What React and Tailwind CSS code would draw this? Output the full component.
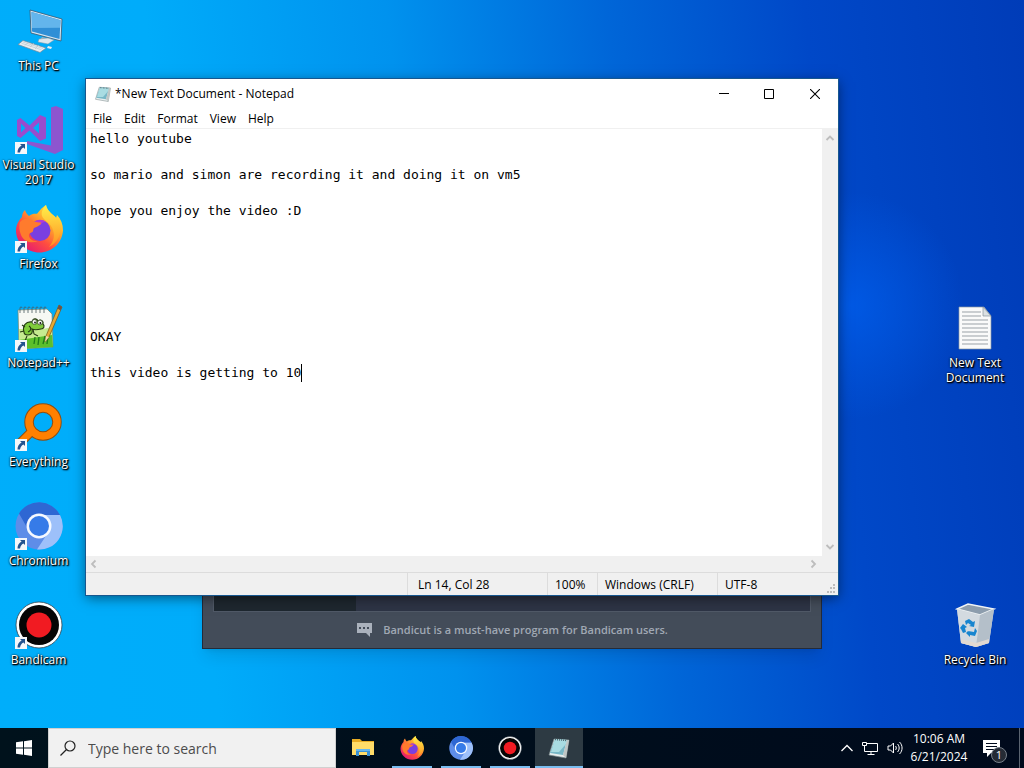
import React, { useState } from 'react';

const INITIAL_TEXT = `hello youtube

so mario and simon are recording it and doing it on vm5

hope you enjoy the video :D






OKAY

this video is getting to 10`;

/* ---------- Icons ---------- */

function ThisPcIcon({ className }) {
    return (
        <svg viewBox="0 0 48 48" className={className}>
            <path d="M15 3l32 9-1 22-30-8z" fill="#d5e6f2" />
            <path d="M15 3l32 9-1 22-30-8z" fill="none" stroke="#37556f" strokeWidth="0.8" />
            <path d="M16.5 5l29 8.200-1 18.800-27.500-7.500z" fill="#2f8fd6" />
            <path d="M16.500 5l29 8.200-.4 7.500L17 21z" fill="#63b5ec" />
            <path d="M27 30l6 1.500-1 3-7-1.500z" fill="#9fb2c0" />
            <path d="M24 32l9-1 6 2-6 4-10-2z" fill="#dfe7ec" stroke="#8196a5" strokeWidth="0.5" />
            <path d="M8 33.500L31 41l-6 4.500L3 37.500z" fill="#e9eef1" stroke="#71889a" strokeWidth="0.7" />
            <path d="M8 35l20 6.500M6.500 36.300l20 6.500M10 38.500l4-4M15 40l4-4M20 42l4-4" stroke="#b4c2cb" strokeWidth="0.6" />
            <path d="M33 39l4 1-1 2-4-1z" fill="#e9eef1" />
        </svg>
    );
}

function VisualStudioIcon({ className }) {
    return (
        <svg viewBox="0 0 48 48" className={className}>
            <path d="M36 1.500L41 0l7 3v41l-8 4L12 38v-3l24 4.500z" fill="#8d55cf" />
            <path
                d="M2 14l3.500-2 9 7.500L25 9l6 2.500v21L25 35 14.500 24.500 5.500 32 2 30zM6 17.500v9l4.500-4.500zM24 16.500L18 22l6 5.500z"
                fill="#9a4ccd"
                fillRule="evenodd"
            />
        </svg>
    );
}

function FirefoxIcon({ className }) {
    return (
        <svg viewBox="0 0 48 48" className={className}>
            <defs>
                <linearGradient id="fox" x1="0.850" y1="0.100" x2="0.200" y2="0.900">
                    <stop offset="0" stopColor="#ffe944" />
                    <stop offset="0.350" stopColor="#ffa22b" />
                    <stop offset="0.650" stopColor="#ff503e" />
                    <stop offset="1" stopColor="#e81e6d" />
                </linearGradient>
                <linearGradient id="foxTail" x1="0" y1="0" x2="0" y2="1">
                    <stop offset="0" stopColor="#fff04a" />
                    <stop offset="1" stopColor="#ff9022" />
                </linearGradient>
            </defs>
            <path
                d="M7 12c0-3 1-5 3-7 1 3 2 4.500 4 6 2-2 5-2.500 8-2.300C24 7 26 3 31 0c1 5 4 7 7 10 1.500 1 2.500 2 3 3l1-3c4 4 6 9.500 6 15.500C47 38 37 47.500 24.500 47.500S1 38 1 25.500C1 20 4 15 7 12z"
                fill="url(#fox)"
            />
            <path d="M31 0c1 5 4 7 7 10 5 4 8 9 7 17-1 7-5 12-11 15 5-6 6-12 4-17-2-7-9-9-11-14-1-4 1-8 4-11z" fill="url(#foxTail)" />
            <circle cx="25" cy="25.500" r="10.500" fill="#7a3fe0" />
            <path d="M18 18c4-4 9-4 13-1-3-.5-5 1-5 3z" fill="#b03bd8" />
            <path d="M5 17c4-4 9-4 13-1 3 1.500 6 1.500 8 1.500 0 3-4 4-7 5.500-1 1-.5 3-1.500 4-2 1-4 1-3.500 4 1 4 5 5.500 9 5-6 3-14 1-17-6-2-5-2-9-1-13z" fill="#ff7b2d" />
        </svg>
    );
}

function NotepadPlusIcon({ className }) {
    return (
        <svg viewBox="0 0 48 48" className={className}>
            <path d="M3 6l29-1 5 5 1 33-34 2z" fill="#f6f8f3" stroke="#75846c" strokeWidth="0.7" />
            <path d="M4 31c9 2 18-2 33-4l1 16-34 2z" fill="#5cbf2c" />
            <path d="M4 25c9 0 18 2 33-2v8L4 36z" fill="#c6eb90" />
            {[5, 9, 13, 17, 21, 25, 29].map((x) => (
                <path key={x} d={`M${x} 9V4c0-1.500 2-1.500 2 0`} fill="none" stroke="#4b5a60" strokeWidth="0.8" />
            ))}
            <path d="M9 28c-2-6 2-11 8-10 1-4 5-4 6-1 3-2 6 0 5 3 2 2 1 5-2 5-4 1-7 1-9 0 1 3 0 6-4 6-2 0-4-1-4-3z" fill="#7fcb3c" stroke="#243a13" strokeWidth="1.100" />
            <path d="M10 23l-3-2M9 27l-4 1M12 32l-2 5M18 25l1 5 4 2M14 22c3 2 2 5-1 6" fill="none" stroke="#243a13" strokeWidth="1.100" />
            <circle cx="19.500" cy="18" r="2.400" fill="#fff" stroke="#243a13" strokeWidth="0.7" />
            <circle cx="25" cy="18.500" r="2.400" fill="#fff" stroke="#243a13" strokeWidth="0.7" />
            <circle cx="20" cy="18.500" r="0.9" fill="#111" />
            <circle cx="25.300" cy="19" r="0.9" fill="#111" />
            <path d="M19 40l1-7M23 41l1-8M28 40l2-8M32 40l1-8" stroke="#1e7a1b" strokeWidth="1.300" />
            <path d="M44 1l3 2-13 30-4 5 1-6z" fill="#e5a935" stroke="#755118" strokeWidth="0.7" />
            <path d="M44 1l3 2-1.500 3.500-3-2z" fill="#6e5147" />
            <path d="M31 32l3 1-4 5z" fill="#f2dcb0" />
        </svg>
    );
}

function EverythingIcon({ className }) {
    return (
        <svg viewBox="0 0 48 48" className={className}>
            <path d="M19 26L5 40" stroke="#8e4d10" strokeWidth="9" />
            <circle cx="28" cy="19" r="14" fill="none" stroke="#8e4d10" strokeWidth="9.500" />
            <path d="M19 26L5 40" stroke="#ff8000" strokeWidth="7" />
            <circle cx="28" cy="19" r="14" fill="none" stroke="#ff8000" strokeWidth="7.500" />
        </svg>
    );
}

function ChromiumIcon({ className }) {
    return (
        <svg viewBox="0 0 48 48" className={className}>
            <circle cx="24" cy="24" r="23.500" fill="#5e8de8" />
            <path d="M24 13h21a23.500 23.500 0 0 1-23 34.500L33.500 30z" fill="#9dc0fa" />
            <path d="M4 11.500a23.500 23.500 0 0 1 41 1.500H24L14 29z" fill="#2e67d3" />
            <circle cx="24" cy="24" r="12.500" fill="#f5f9ff" />
            <circle cx="24" cy="24" r="10" fill="#367be8" />
        </svg>
    );
}

function BandicamIcon({ className }) {
    return (
        <svg viewBox="0 0 48 48" className={className}>
            <circle cx="24" cy="24" r="23" fill="#fff" stroke="#35424d" strokeWidth="0.8" />
            <circle cx="24" cy="24" r="20" fill="#050505" />
            <circle cx="24" cy="24" r="12.500" fill="#f11b22" />
        </svg>
    );
}

function TextFileIcon({ className }) {
    return (
        <svg viewBox="0 0 48 48" className={className}>
            <path d="M8 3h25l7 9v33H8z" fill="#fafafa" stroke="#8b98a5" strokeWidth="0.7" />
            <path d="M32 3v9h8z" fill="#dbe0e3" stroke="#87929b" strokeWidth="0.7" />
            {[8, 12].map((y) => (
                <path key={y} d={`M11 ${y}h19`} stroke="#9aa1a7" />
            ))}
            {[16, 20, 24, 28, 32, 36, 40].map((y) => (
                <path key={y} d={`M11 ${y}h26`} stroke="#9aa1a7" />
            ))}
        </svg>
    );
}

function RecycleBinIcon({ className }) {
    return (
        <svg viewBox="0 0 48 48" className={className}>
            <path d="M6 8l11-5 26 5-5 34-13 4-15-4z" fill="#d5dbe2" />
            <path d="M6 8l11-5 26 5-14 6z" fill="#8d9dad" stroke="#eff3f5" strokeWidth="1.400" />
            <path d="M6 8l23 6-4 32-15-4z" fill="#d3dae0" />
            <path d="M29 14l14-6-5 34-13 4z" fill="#b4bfc9" />
            <path d="M10 38l15 4 13-4v4l-13 4-15-4z" fill="#e2d9d1" />
            <g fill="#1785cf">
                <path d="M14 20l4-2 4 3 2-1-1 6-5-1 2-1-3-2-2 2z" />
                <path d="M12 23l4 3-2 1 1 4-3 1-2-4-1-1z" />
                <path d="M17 30l6 1 1-4 2 3-2 5-5-1v2l-4-4 3-3z" />
            </g>
        </svg>
    );
}

function NotepadIcon({ className }) {
    return (
        <svg viewBox="0 0 24 24" className={className}>
            <path d="M7 3l15 1-3 18-17-3z" fill="#e8eeee" stroke="#79888b" strokeWidth="0.7" />
            <path d="M8 3l12 1-4 15L3 17z" fill="#78b8c7" />
            <path d="M8 3l12 1-1 4-7 8-8 0z" fill="#a9dce2" />
            <path d="M20 4l2 0-3 18-3-3z" fill="#bfc6c5" />
            <path d="M8 3.500l12 1" stroke="#536970" strokeWidth="1.500" strokeDasharray="1 1" />
        </svg>
    );
}

function FolderIcon({ className }) {
    return (
        <svg viewBox="0 0 24 24" className={className}>
            <path d="M1 3h8l2 2h12v14H1z" fill="#e8ac24" />
            <path d="M1 6h22v13H1z" fill="#ffdc69" />
            <path d="M5 20v-7h14v7h-3v-4H8v4z" fill="#3991d5" />
            <path d="M5 13h14v2H5z" fill="#65b7ef" />
        </svg>
    );
}

function ShortcutArrow() {
    return (
        <svg viewBox="0 0 12 12" className="absolute bottom-0 left-0 size-3">
            <path d="M0 0h12v12H0z" fill="#f5f7fa" />
            <path d="M5 2h5v5L8.500 5.500C6.500 6.500 5.500 8 5 10.500H2.500C2.500 7.500 4 5 6.600 3.600z" fill="#24538f" />
        </svg>
    );
}

/* ---------- Desktop ---------- */

function DesktopIcon({ icon: Icon, label, shortcut, className = '' }) {
    return (
        <button type="button" className={`flex flex-col items-center gap-[3px] ${className}`}>
            <span className="relative block size-12">
                <Icon className="size-12" />
                {shortcut && <ShortcutArrow />}
            </span>
            <span className="w-19 text-center text-[12px] leading-[15px] text-white [text-shadow:1px_1px_2px_#000,1px_1px_1px_#000,0_0_2px_#000]">
                {label}
            </span>
        </button>
    );
}

const shortcuts = [
    { label: 'This PC', icon: ThisPcIcon },
    { label: 'Visual Studio 2017', icon: VisualStudioIcon, shortcut: true },
    { label: 'Firefox', icon: FirefoxIcon, shortcut: true },
    { label: 'Notepad++', icon: NotepadPlusIcon, shortcut: true },
    { label: 'Everything', icon: EverythingIcon, shortcut: true },
    { label: 'Chromium', icon: ChromiumIcon, shortcut: true },
    { label: 'Bandicam', icon: BandicamIcon, shortcut: true },
];

function BandicamWindow() {
    return (
        <section
            aria-label="Bandicam"
            className="absolute top-[559px] left-[202px] flex w-[620px] flex-col border border-[#252b38] bg-[#434c59] px-[10px] shadow-lg"
        >
            <div className="flex h-[52px] border border-t-0 border-[#505967] bg-[#2d3445]">
                <div className="w-[142px] bg-[#1e272f]"></div>
            </div>
            <p className="flex h-9 items-center justify-center gap-[10px] text-[11px] font-semibold text-[#a0a8b4]">
                <svg viewBox="0 0 17 14" className="h-[14px] w-[17px]">
                    <path d="M1 0h15v10h-2v4l-4-4H1z" fill="#aab1bc" />
                    <path d="M3 4h2v2H3zM7 4h2v2H7zM11 4h2v2h-2z" fill="#434c59" />
                </svg>
                Bandicut is a must-have program for Bandicam users.
            </p>
        </section>
    );
}

function Chevron({ d }) {
    return (
        <svg viewBox="0 0 10 10" className="size-[10px]" fill="none" stroke="#bdbdbd" strokeWidth="1.800">
            <path d={d} />
        </svg>
    );
}

function NotepadWindow() {
    const [text, setText] = useState(INITIAL_TEXT);

    const lines = text.split('\n');
    const row = lines.length;
    const col = lines[row - 1].length;

    return (
        <section
            aria-label="Notepad"
            className="absolute top-[79px] left-[86px] flex h-[516px] w-[752px] flex-col bg-white text-[12px] text-black shadow-[0_0_0_1px_#17578f,0_3px_12px_rgba(0,0,0,0.5)]"
        >
            <header className="flex h-[30px] items-center">
                <NotepadIcon className="mr-[3px] ml-2 size-[18px]" />
                <h1 className="flex-1">*New Text Document - Notepad</h1>
                <button type="button" aria-label="Minimize" className="flex h-full w-[45px] items-center justify-center">
                    <svg viewBox="0 0 10 10" className="size-[10px]">
                        <path d="M0 4.500h10" stroke="#000" />
                    </svg>
                </button>
                <button type="button" aria-label="Maximize" className="flex h-full w-[45px] items-center justify-center">
                    <svg viewBox="0 0 10 10" className="size-[10px]">
                        <path d="M.5.5h9v9h-9z" fill="none" stroke="#000" />
                    </svg>
                </button>
                <button type="button" aria-label="Close" className="flex h-full w-[47px] items-center justify-center">
                    <svg viewBox="0 0 10 10" className="size-[10px]">
                        <path d="M0 0l10 10M10 0L0 10" stroke="#000" strokeWidth="1.100" />
                    </svg>
                </button>
            </header>

            <nav className="flex h-5 items-center gap-3 border-b border-[#f0f0f0] px-[7px]">
                {['File', 'Edit', 'Format', 'View', 'Help'].map((item) => (
                    <button key={item} type="button">{item}</button>
                ))}
            </nav>

            <div className="flex min-h-0 flex-1">
                <div className="relative flex-1 font-['DejaVu_Sans_Mono',monospace] text-[13px] leading-[18px]">
                    <textarea
                        aria-label="Document text"
                        value={text}
                        onChange={(e) => setText(e.target.value)}
                        spellCheck={false}
                        wrap="off"
                        className="block size-full resize-none overflow-hidden px-1 pt-px caret-transparent outline-none"
                    />
                    {/* Caret sits after the last typed character */}
                    <span
                        className="absolute mt-px ml-1 h-[18px] w-px bg-black"
                        style={{ left: `${col}ch`, top: `${(row - 1) * 18}px` }}
                    ></span>
                </div>
                <div className="flex w-4 flex-col items-center justify-between bg-[#f0f0f0] py-1">
                    <Chevron d="M1.500 7L5 3.500 8.500 7" />
                    <Chevron d="M1.500 3L5 6.500 8.500 3" />
                </div>
            </div>

            <div className="flex h-4 items-center justify-between bg-[#f0f0f0] pr-5 pl-[3px]">
                <Chevron d="M6.500 1.500L3 5l3.500 3.500" />
                <Chevron d="M3.500 1.500L7 5 3.500 8.500" />
            </div>

            <footer className="flex h-[23px] items-stretch border-t border-[#dcdcdc] bg-[#f0f0f0] leading-[23px]">
                <span className="flex-1"></span>
                <span className="w-[140px] border-l border-[#dcdcdc] pl-[10px]">Ln {row}, Col {col + 1}</span>
                <span className="w-[50px] border-l border-[#dcdcdc] pl-[7px]">100%</span>
                <span className="w-[120px] border-l border-[#dcdcdc] pl-[7px]">Windows (CRLF)</span>
                <span className="w-[108px] border-l border-[#dcdcdc] pl-[7px]">UTF-8</span>
                <svg viewBox="0 0 12 12" className="mr-px size-3 self-end" fill="#bcbcbc">
                    <path d="M8 1h2v2H8zM5 4h2v2H5zM8 4h2v2H8zM2 8h2v2H2zM5 8h2v2H5zM8 8h2v2H8z" />
                </svg>
            </footer>
        </section>
    );
}

/* ---------- Taskbar ---------- */

const tasks = [
    { label: 'File Explorer', icon: FolderIcon },
    { label: 'Firefox', icon: FirefoxIcon, open: true },
    { label: 'Chromium', icon: ChromiumIcon, open: true },
    { label: 'Bandicam', icon: BandicamIcon, open: true },
    { label: 'Notepad', icon: NotepadIcon, open: true, active: true },
];

function Taskbar() {
    return (
        <footer className="flex h-10 items-stretch bg-linear-to-r from-[#00121c] to-[#000a1c] text-white">
            <button type="button" aria-label="Start" className="flex w-12 items-center justify-center">
                <svg viewBox="0 0 16 16" className="size-4" fill="#fff">
                    <path d="M0 2.300L7 1.300V7.500H0zM8 1.200L16 0v7.500H8zM0 8.500h7v6.200L0 13.700zM8 8.500h8V16l-8-1.200z" />
                </svg>
            </button>

            <label className="flex w-72 items-center gap-3 border border-[#d0d0d0] bg-[#f1f1f1] px-[11px]">
                <svg viewBox="0 0 16 16" className="size-4 shrink-0" fill="none" stroke="#222" strokeWidth="1.200">
                    <circle cx="10" cy="6" r="5" />
                    <path d="M6.500 9.500L.5 15.500" />
                </svg>
                <input
                    type="text"
                    aria-label="Search"
                    placeholder="Type here to search"
                    className="w-full min-w-0 text-[14px] outline-none placeholder:text-[#4c4c4c]"
                />
            </label>

            <nav className="flex flex-1 gap-px pl-[3px]">
                {tasks.map(({ label, icon: Icon, open, active }) => (
                    <button
                        key={label}
                        type="button"
                        aria-label={label}
                        className={`relative flex w-12 items-center justify-center ${active ? 'bg-[#2d3a43]' : ''}`}
                    >
                        <Icon className="size-6" />
                        {open && (
                            <span className={`absolute bottom-0 h-[2px] bg-[#79bdf0] ${active ? 'inset-x-0' : 'inset-x-1'}`}></span>
                        )}
                    </button>
                ))}
            </nav>

            <div className="flex items-center gap-2">
                <button type="button" aria-label="Show hidden icons">
                    <svg viewBox="0 0 12 8" className="h-2 w-3" fill="none" stroke="#fff" strokeWidth="1.300">
                        <path d="M.5 7L6 1.500 11.500 7" />
                    </svg>
                </button>
                <svg viewBox="0 0 18 16" className="h-4 w-[18px]" fill="none" stroke="#fff">
                    <path d="M6 3.500h10.500v8H3.500V7M10 11.500v3M6.500 14.500h7" />
                    <path d="M1.500 2.500h4v3h-4zM3.500 5.500V8" />
                </svg>
                <svg viewBox="0 0 16 16" className="size-4" fill="none" stroke="#fff">
                    <path d="M1 6h2.500l3-3v10l-3-3H1z" />
                    <path d="M8.500 6c1 1 1 3 0 4M10.500 4c2.200 2.200 2.200 5.800 0 8M12.500 2c3.400 3.300 3.400 8.700 0 12" />
                </svg>
            </div>

            <div className="flex w-[72px] flex-col items-center justify-center text-[12px] leading-[18px]">
                <time>10:06 AM</time>
                <time>6/21/2024</time>
            </div>

            <button type="button" aria-label="Notifications" className="relative flex w-[45px] items-center border-r border-[#5b6470] pl-2">
                <svg viewBox="0 0 17 17" className="size-[17px]">
                    <path d="M0 0h17v13H8l-4 4v-4H0z" fill="#fff" />
                    <path d="M3 3.500h11M3 6.500h11M3 9.500h8" stroke="#000a1c" strokeWidth="1.200" />
                </svg>
                <span className="absolute right-3 bottom-[5px] flex size-4 items-center justify-center rounded-full border border-[#77808a] bg-[#252b35] text-[11px]">
                    1
                </span>
            </button>
            <button type="button" aria-label="Show desktop" className="w-1"></button>
        </footer>
    );
}

function App() {
    return (
        <div className="flex min-h-screen flex-col font-['Open_Sans',sans-serif]">
            <main className="relative flex flex-1 justify-between overflow-hidden bg-[radial-gradient(circle_at_83%_42%,rgba(0,96,240,0.7)_0%,transparent_12%),linear-gradient(84deg,#00aefa_0%,#00acfa_20%,#0092ee_42%,#0066d8_62%,#0048c8_80%,#003cb8_100%)]">
                <div className="grid w-[77px] auto-rows-[99px] justify-items-center pt-[7px]">
                    {shortcuts.map((item) => (
                        <DesktopIcon key={item.label} {...item} className="self-start" />
                    ))}
                </div>
                <div className="grid w-[98px] grid-rows-[repeat(7,99px)] justify-items-center pt-[7px]">
                    <DesktopIcon icon={TextFileIcon} label="New Text Document" className="row-start-4 self-start" />
                    <DesktopIcon icon={RecycleBinIcon} label="Recycle Bin" className="row-start-7 self-start" />
                </div>

                <BandicamWindow />
                <NotepadWindow />
            </main>
            <Taskbar />
        </div>
    );
}

export default App;
